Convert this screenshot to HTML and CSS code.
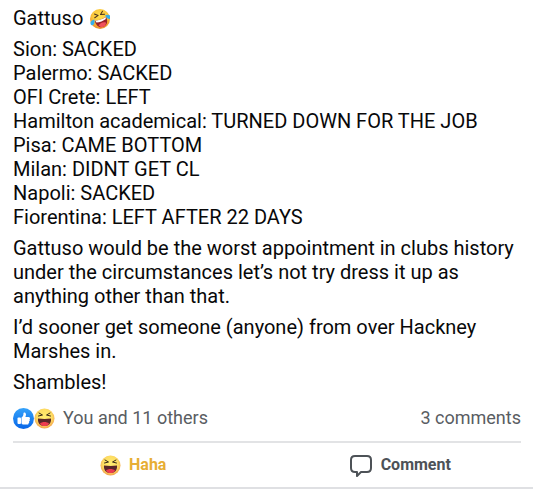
FILE: index.html
```html
<!DOCTYPE html>
<html lang="en">
<head>
<meta charset="utf-8">
<meta name="viewport" content="width=device-width, initial-scale=1">
<title>Post</title>
<link rel="stylesheet" href="styles.css">
</head>
<body>
<svg class="defs" aria-hidden="true">
  <defs>
    <radialGradient id="face" cx="50%" cy="42%" r="58%">
      <stop offset="0" stop-color="#ffed70"/>
      <stop offset="0.65" stop-color="#fddd62"/>
      <stop offset="1" stop-color="#f3a04e"/>
    </radialGradient>
    <radialGradient id="warm" cx="50%" cy="35%" r="62%">
      <stop offset="0" stop-color="#ffdf4e"/>
      <stop offset="0.6" stop-color="#fbc83c"/>
      <stop offset="1" stop-color="#ee8e2c"/>
    </radialGradient>
    <linearGradient id="blue" x1="0" y1="0" x2="0" y2="1">
      <stop offset="0" stop-color="#35a2fa"/>
      <stop offset="1" stop-color="#0866e8"/>
    </linearGradient>
    <symbol id="haha" viewBox="0 0 42 42">
      <circle cx="21" cy="21" r="20" fill="url(#face)"/>
      <path d="M8 21c8 1 18 1 26 0 1 9-4 15-13 15S7 30 8 21z" fill="#59252a"/>
      <path d="M12 31c4-4 14-4 18 0-2 4-5 5-9 5s-7-1-9-5z" fill="#ed3b50"/>
      <path d="M10 10l7 4-8 2M32 10l-7 4 8 2" fill="none" stroke="#382919" stroke-width="2" stroke-linecap="round" stroke-linejoin="round"/>
    </symbol>
    <symbol id="rofl" viewBox="0 0 40 40">
      <circle cx="20" cy="20" r="20" fill="url(#warm)"/>
      <g transform="rotate(-20 20 20)">
        <path d="M9 20c8 2 16 2 24 0 1 10-4 17-12 17S8 30 9 20z" fill="#9a2028"/>
        <path d="M10 20c7 2 15 2 22 0l-1 4c-6 2-14 2-20 0z" fill="#fff"/>
        <path d="M13 32c3-5 12-5 16-1-3 5-5 6-8 6s-6-1-8-5z" fill="#f0505c"/>
        <path d="M13 7l6 5-8 2M30 7l-6 5 8 2" fill="none" stroke="#4b321d" stroke-width="2" stroke-linecap="round" stroke-linejoin="round"/>
        <path d="M9 17c-6-1-11 3-10 7 2 6 9 2 10-7zM32 17c6-1 11 3 10 7-2 6-9 2-10-7z" fill="#35aeea"/>
      </g>
    </symbol>
    <symbol id="like" viewBox="0 0 42 42">
      <circle cx="21" cy="21" r="21" fill="url(#blue)"/>
      <rect x="9" y="19" width="7" height="13" rx="2" fill="#fff"/>
      <path d="M17 19c3-2 4-5 4-9 0-2 5-2 5 3 0 2-1 3-1 5h6c3 0 4 3 2 5 1 1 1 3-1 4 1 2 0 3-1 4 0 2-1 2-3 2h-7c-2 0-3-1-4-2z" fill="#fff"/>
    </symbol>
  </defs>
</svg>
<article class="post">
  <div class="message">
    <p>Gattuso <svg class="emoji" role="img" aria-label="Rolling on the floor laughing"><use href="#rofl"/></svg></p>
    <p>Sion: SACKED<br>Palermo: SACKED<br>OFI Crete: LEFT<br>Hamilton academical: TURNED DOWN FOR THE JOB<br>Pisa: CAME BOTTOM<br>Milan: DIDNT GET CL<br>Napoli: SACKED<br>Fiorentina: LEFT AFTER 22 DAYS</p>
    <p>Gattuso would be the worst appointment in clubs history under the circumstances let’s not try dress it up as anything other than that.</p>
    <p>I’d sooner get someone (anyone) from over Hackney Marshes in.</p>
    <p>Shambles!</p>
  </div>
  <div class="summary">
    <a class="reactions" href="#reactions">
      <span class="faces"><svg class="icon" aria-hidden="true"><use href="#like"/></svg><svg class="icon" aria-hidden="true"><use href="#haha"/></svg></span>
      <span>You and 11 others</span>
    </a>
    <a href="#comments">3 comments</a>
  </div>
  <div class="actions">
    <button class="action chosen" type="button"><svg class="icon" aria-hidden="true"><use href="#haha"/></svg>Haha</button>
    <button class="action" type="button"><svg class="bubble" viewBox="0 0 24 24" aria-hidden="true"><path d="M6 3h12q4 0 4 4v8q0 4-4 4h-6l-4 4v-4H6q-4 0-4-4V7q0-4 4-4z"/></svg>Comment</button>
  </div>
</article>
</body>
</html>
```
FILE: styles.css
```css
* {
  box-sizing: border-box;
}

body {
  margin: 0;
  background: #fff;
  color: #080809;
  font-family: Roboto, "Liberation Sans", sans-serif;
  font-size: 20px;
  line-height: 24px;
}

.defs {
  position: absolute;
  width: 0;
  height: 0;
}

.post {
  padding-top: 6px;
  border-bottom: 2px solid #dfe0e3;
}

.message {
  display: flex;
  flex-direction: column;
  gap: 7px;
  padding: 0 12px 0 13px;
}

.message p {
  margin: 0;
}

.emoji {
  width: 20px;
  height: 20px;
  margin-left: 2px;
  vertical-align: -4px;
}

.summary {
  display: flex;
  justify-content: space-between;
  margin: 0 12px 0 13px;
  padding: 12px 0 11px;
  border-bottom: 2px solid #e2e3e5;
  font-size: 18px;
}

.summary a {
  color: #595d62;
  text-decoration: none;
}

.reactions {
  display: flex;
  align-items: center;
  gap: 8px;
}

.faces {
  display: flex;
}

.icon {
  flex: none;
  width: 21px;
  height: 21px;
}

.actions {
  display: grid;
  grid-template-columns: 1fr 1fr;
}

.action {
  display: flex;
  align-items: center;
  justify-content: center;
  gap: 8px;
  height: 44px;
  padding: 0;
  border: 0;
  background: none;
  color: #4d5257;
  font: bold 16px/24px Roboto, "Liberation Sans", sans-serif;
}

.chosen {
  color: #e7ae35;
}

.bubble {
  width: 24px;
  height: 24px;
  fill: none;
  stroke: currentColor;
  stroke-width: 2;
  stroke-linejoin: round;
}
```
